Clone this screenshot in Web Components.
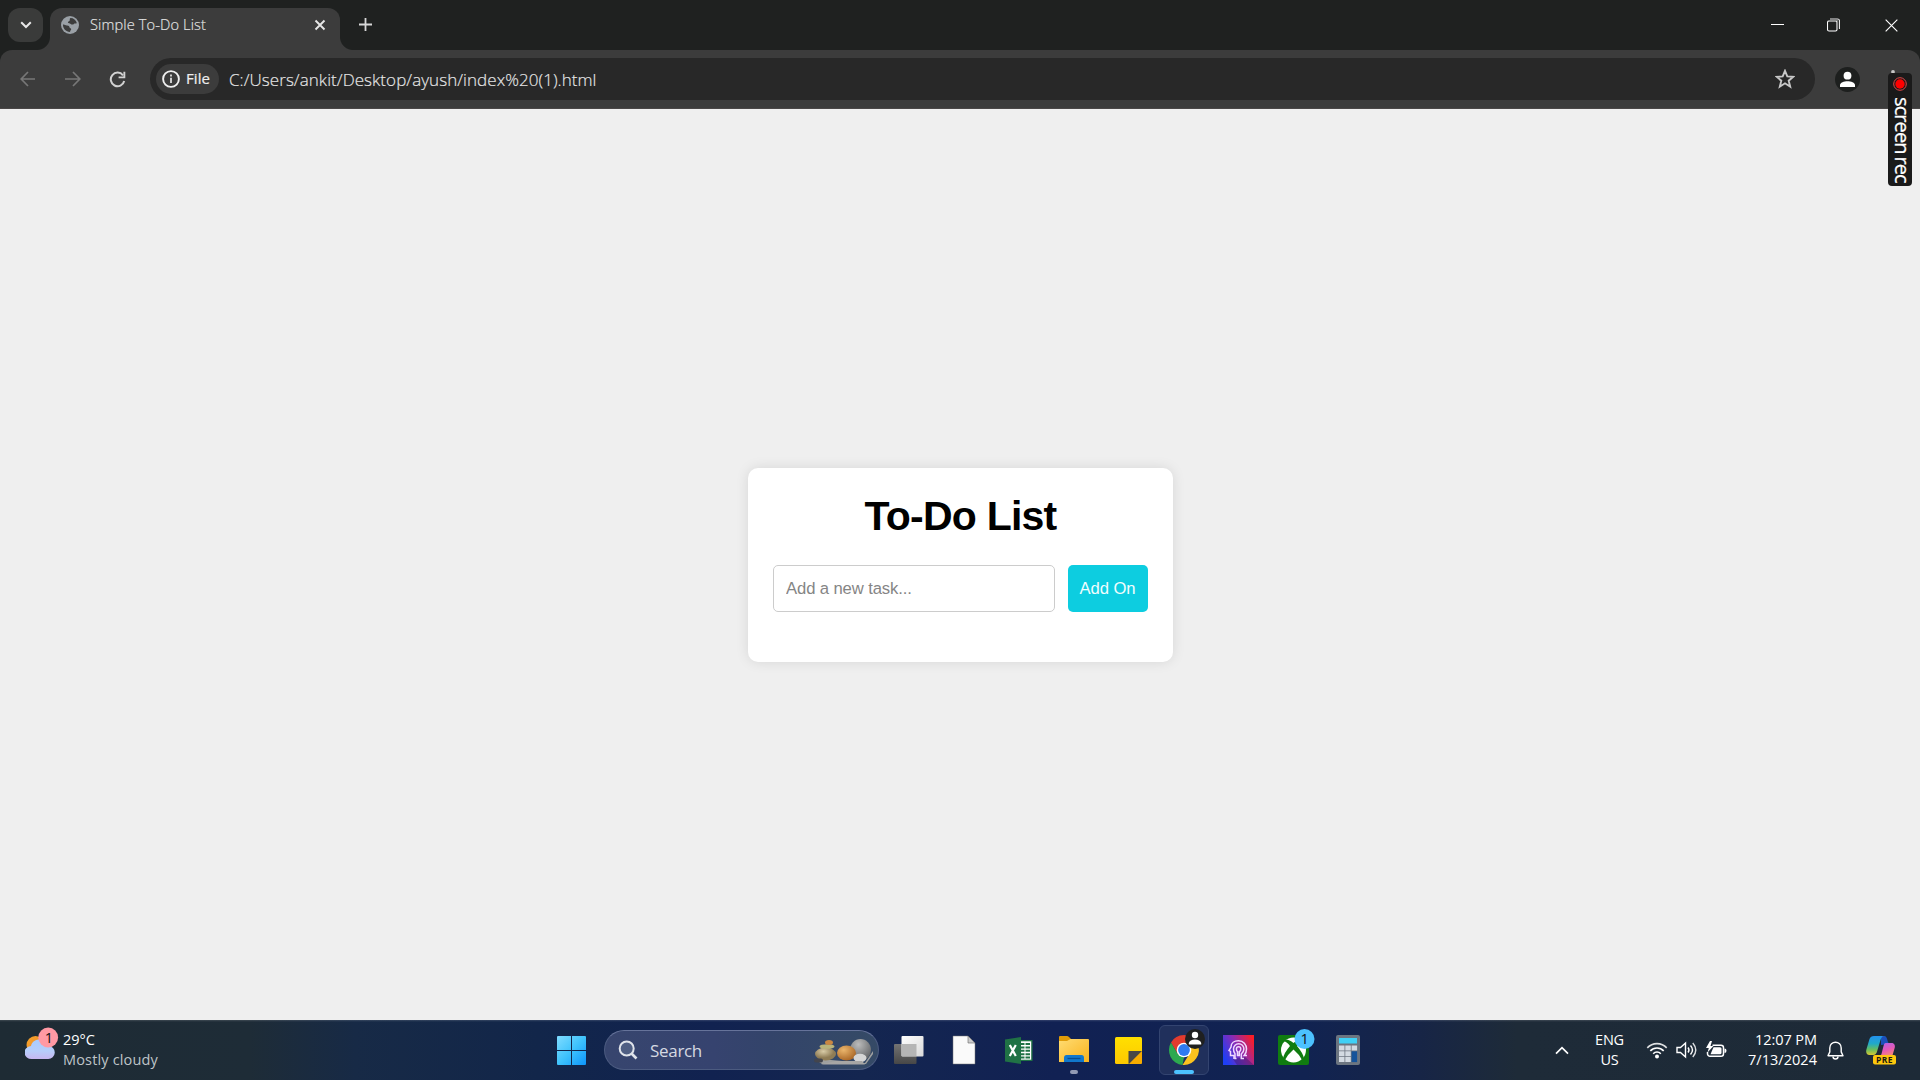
<!DOCTYPE html>
<html lang="en">
<head>
<meta charset="utf-8">
<title>Simple To-Do List</title>
<style>
html,body{margin:0;height:100%;overflow:hidden}
body{font-family:"Open Sans","Noto Sans",sans-serif;background:#efefef}
</style>
</head>
<body>
<desktop-screen></desktop-screen>
<script>
const define = (name, html, setup) => {
  const tpl = document.createElement('template');
  tpl.innerHTML = html;
  customElements.define(name, class extends HTMLElement {
    connectedCallback() {
      if (this.shadowRoot) return;
      this.attachShadow({mode: 'open'}).append(tpl.content.cloneNode(true));
      if (setup) setup(this);
    }
  });
};

/* Text run spread over a given advance width. */
define('fit-text', `<style>:host{display:block;white-space:pre;flex:none}span{display:inline-block}</style><span><slot></slot></span>`, el => {
  const s = el.shadowRoot.querySelector('span');
  const w = +el.getAttribute('w');
  const n = el.textContent.length;
  s.style.letterSpacing = ((w - s.getBoundingClientRect().width) / n) + 'px';
  el.style.width = w + 'px';
});

define('browser-tab', `<style>
:host{display:flex;align-items:center;position:relative;box-sizing:border-box;width:290px;height:42px;padding:0 14px 9px 11px;margin-left:7px;background:#3c3c3c;border-radius:12px 12px 0 0;align-self:flex-end;color:#e3e3e3;font-size:14.6px}
:host::before,:host::after{content:"";position:absolute;bottom:0;width:13px;height:13px}
:host::before{left:-13px;background:radial-gradient(circle at 0 0,transparent 12.5px,#3c3c3c 13.5px)}
:host::after{right:-13px;background:radial-gradient(circle at 100% 0,transparent 12.5px,#3c3c3c 13.5px)}
fit-text{margin:0 0 1px 11px;font-weight:300;-webkit-text-stroke:.15px #e3e3e3}
.x{margin-left:auto}
svg{display:block;flex:none}
</style>
<svg width="18" height="18" viewBox="0 0 18 18"><circle cx="9" cy="9" r="9" fill="#9aa0a6"/><path d="M2 8.600C3.600 8.200 4.500 9.600 6.200 9.400c1.600 0 2.200.9 2.400 2 .2 1 1.700.6 1.600 1.900-.1.900-.900 1-1.200 2.700C5 16 1.700 12.500 2 8.600zM9.500 2C12.600 2 15 4 15.800 7c-.9 1.200-2 .1-2.900.9-.9.900-2.500.6-3.200 0-.8-.7-2.500-.2-2.800-1.300-.2-1.100 1.200-1.300 1.700-1.900.5-.7-.3-2 .9-2.700z" fill="#3c3c3c"/></svg>
<fit-text w="116">Simple To-Do List</fit-text>
<svg class="x" width="12" height="12" viewBox="0 0 12 12"><path d="M1.500 1.500l9 9M10.500 1.500l-9 9" stroke="#e6e6e6" stroke-width="1.900"/></svg>`);

define('tab-strip', `<style>
:host{display:flex;height:50px;background:#1f2120;align-items:center;box-sizing:border-box}
.search{width:35px;height:34px;margin:0 0 0 8px;border-radius:12px;background:#3a3b3a;display:flex;align-items:center;justify-content:center}
svg{display:block;flex:none}
.plus{margin-left:19px;margin-bottom:1px}
.win{margin-left:auto;display:flex;align-items:center;padding-right:22px}
</style>
<div class="search"><svg width="12" height="8" viewBox="0 0 12 8"><path d="M1.200 1.300L6 6l4.800-4.700" fill="none" stroke="#e8e8e8" stroke-width="2"/></svg></div>
<browser-tab></browser-tab>
<svg class="plus" width="13" height="13" viewBox="0 0 13 13"><path d="M6.500 0v13M0 6.500h13" stroke="#d8d8d8" stroke-width="1.800"/></svg>
<div class="win">
<svg width="13" height="14" viewBox="0 0 13 14"><path d="M0 6.500h13" stroke="#fff"/></svg>
<svg style="margin:0 45px 0 43px" width="13" height="14" viewBox="0 0 13 14"><rect x=".5" y="3" width="9.500" height="10" rx="1.500" fill="none" stroke="#fff" stroke-width="1.100"/><path d="M3 1h7.500q2 0 2 2v8" fill="none" stroke="#e6e6e6" stroke-width="1.100"/><path d="M2 2.600h8.700v8" fill="none" stroke="#8d8e8d" stroke-width="1"/></svg>
<svg width="13" height="13" viewBox="0 0 14 14"><path d="M.7.7l12.600 12.600M13.300.7L.7 13.300" stroke="#fff" stroke-width="1.200"/></svg>
</div>`);

define('tool-bar', `<style>
:host{display:block;background:#1f2120}
.bar{display:flex;align-items:center;height:59px;box-sizing:border-box;background:#3c3c3c;border-radius:12px 12px 0 0;border-bottom:1px solid #4a4747;padding:0 20px}
svg{display:block;flex:none}
.omni{display:flex;align-items:center;width:1665px;height:42px;margin-left:24px;background:#282828;border-radius:21px;box-sizing:border-box;padding:0 20px 0 6px}
.chip{display:flex;align-items:center;box-sizing:border-box;width:63px;height:30px;border-radius:15px;background:#3c3c3c;padding-left:6px}
.chip fit-text{margin-left:6px;font-size:15px;color:#eee;font-weight:500;-webkit-text-stroke:.2px #eee;line-height:28px;height:30px}
.url{margin-left:10px;font-size:17px;font-weight:300;color:#e9e9e9;-webkit-text-stroke:.15px #e9e9e9;margin-top:1px}
.star{margin-left:auto}
.me{margin-left:20px}
.dots{margin-left:31px}
</style>
<div class="bar">
<svg width="16" height="16" viewBox="0 0 16 16"><path d="M15 8H1.500M8 1L1.200 8 8 15" fill="none" stroke="#777" stroke-width="1.700"/></svg>
<svg style="margin-left:29px" width="16" height="16" viewBox="0 0 16 16"><path d="M0 8h14.500M8 1l6.800 7L8 15" fill="none" stroke="#777" stroke-width="1.700"/></svg>
<svg style="margin-left:28px" width="17" height="17" viewBox="0 0 17 17"><path d="M14 4.300A6.800 6.800 0 1 0 15.200 10" fill="none" stroke="#d2d2d2" stroke-width="2"/><path d="M16.300.8v6.500H9.600V5.400h4.800V.8z" fill="#d2d2d2"/></svg>
<div class="omni">
<div class="chip"><svg width="18" height="18" viewBox="0 0 18 18"><circle cx="9" cy="9" r="7.900" fill="none" stroke="#f0f0f0" stroke-width="1.900"/><path d="M9 7.700v5.300M9 4.600v2" stroke="#e8e8e8" stroke-width="1.700"/></svg><fit-text w="24">File</fit-text></div>
<fit-text class="url" w="367.500">C:/Users/ankit/Desktop/ayush/index%20(1).html</fit-text>
<svg class="star" width="20" height="20" viewBox="0 0 20 20"><path d="M10 1.800l2.300 5.600 6 .4-4.600 3.900 1.500 6L10 14.300l-5.200 3.400 1.500-6L1.700 7.800l6-.4z" fill="none" stroke="#c8c8c8" stroke-width="1.900"/></svg>
</div>
<svg class="me" width="25" height="25" viewBox="0 0 25 25"><circle cx="12.500" cy="12.500" r="12.500" fill="#1d1f1e"/><circle cx="12.500" cy="8.700" r="3.900" fill="#fff"/><path d="M5 20v-2c0-2.500 4-3.800 7.500-3.800S20 15.500 20 18v2z" fill="#fff"/></svg>
<svg class="dots" width="4" height="18" viewBox="0 0 4 18"><circle cx="2" cy="2" r="1.900" fill="#c8c8c8"/><circle cx="2" cy="9" r="1.900" fill="#c8c8c8"/><circle cx="2" cy="16" r="1.900" fill="#c8c8c8"/></svg>
</div>`);

define('todo-card', `<style>
:host{display:block;width:425px;height:194px;box-sizing:border-box;background:#fff;border-radius:10px;box-shadow:0 0 12.500px rgba(0,0,0,.1);padding:25px;font-family:"Liberation Sans",Arial,sans-serif}
h1{margin:0 0 25px;font-size:41px;line-height:46px;height:47px;display:flex;justify-content:center;color:#000}
.row{display:flex;gap:13px}
input{font:16.670px "Liberation Sans",Arial,sans-serif;width:282px;height:47px;box-sizing:border-box;border:1px solid #ccc;border-radius:5px;padding:0 12px;background:#fff;letter-spacing:-.12px}
input::placeholder{color:#858585}
button{font:16.670px "Liberation Sans",Arial,sans-serif;width:80px;height:47px;border:0;border-radius:5px;padding:0 1px 0 0;background:#0dcde0;color:#f2fdfe;letter-spacing:-.1px}
</style>
<h1><fit-text w="192">To-Do List</fit-text></h1>
<div class="row"><input placeholder="Add a new task..."><button>Add On</button></div>`);

define('screen-rec', `<style>
:host{display:flex;flex-direction:column;align-items:center;position:absolute;left:1888px;top:73px;width:24px;height:113px;box-sizing:border-box;padding-top:3.500px;background:#1a1a1a;border-radius:4px;color:#fff;font-size:20px}
svg{display:block;flex:none}
div{writing-mode:vertical-rl;line-height:24px;height:88px;margin:6px 0 0 4px;white-space:pre;letter-spacing:-.9px;word-spacing:-1.500px;-webkit-text-stroke:.25px #fff}
</style>
<svg width="14" height="14" viewBox="0 0 14 14"><circle cx="7" cy="7" r="6.300" fill="none" stroke="#e34848" stroke-width="1"/><circle cx="7" cy="7" r="4.700" fill="#f00"/></svg>
<div>screen rec</div>`);

define('weather-widget', `<style>
:host{display:flex;width:532px;padding-left:25px;height:60px;box-sizing:border-box;font-size:14.500px;color:#fff;flex:none}
svg{display:block;margin-top:7px;flex:none}
.t{margin:10px 0 0 4px}fit-text{line-height:20px}.s{color:#bfc4c8}
</style>
<svg width="34" height="33" viewBox="0 0 34 33"><defs><linearGradient id="c" x2="0" y2="1"><stop offset="0" stop-color="#a9ccff"/><stop offset=".6" stop-color="#b7cdfa"/><stop offset="1" stop-color="#c7b6f0"/></linearGradient><linearGradient id="s" x2="1" y2="1"><stop stop-color="#f5a62c"/><stop offset="1" stop-color="#ef7f25"/></linearGradient></defs><circle cx="10.500" cy="18" r="9" fill="url(#s)"/><path d="M7 32a7 6.500 0 0 1-1-13C7 14 11 12.500 15 12.500c5 0 8 3 8.500 6.500a6.500 6.500 0 0 1-.5 13z" fill="url(#c)"/><circle cx="23.200" cy="10.500" r="9.900" fill="#ff99a4"/><text x="23.800" y="15.800" text-anchor="middle" font-family="Open Sans" font-size="14.500" fill="#111">1</text></svg>
<div class="t"><fit-text w="32">29°C</fit-text><fit-text class="s" w="95">Mostly cloudy</fit-text></div>`);

define('search-pill', `<style>
:host{display:flex;align-items:center;box-sizing:border-box;width:275px;height:40px;margin-left:18px;border:1px solid #4c5b80;border-top-color:#66739a;border-radius:20px;background:linear-gradient(90deg,#37456e,#36436f 40%,#33446a 60%,#354a66);padding:0 4px 0 13px;color:#d5d9e2;font-size:17px;flex:none}
svg{display:block;flex:none}fit-text{margin:1px 0 0 12px;line-height:38px}.r{margin-left:auto;margin-top:8px}
</style>
<svg width="20" height="20" viewBox="0 0 20 20"><circle cx="8.700" cy="8.500" r="7" fill="#8292ae55" stroke="#dfe3ea" stroke-width="2"/><path d="M13.500 13.500l5 5" stroke="#dfe3ea" stroke-width="2.600"/></svg>
<fit-text w="52">Search</fit-text>
<svg class="r" width="60" height="30" viewBox="0 0 60 30"><defs><radialGradient id="a" cx=".4" cy=".3"><stop stop-color="#d8cba6"/><stop offset="1" stop-color="#8f7c55"/></radialGradient><radialGradient id="b" cx=".35" cy=".3" r=".8"><stop stop-color="#eab56c"/><stop offset="1" stop-color="#a46020"/></radialGradient><radialGradient id="g" cx=".4" cy=".25" r=".8"><stop stop-color="#bbb"/><stop offset="1" stop-color="#5e6063"/></radialGradient></defs>
<path d="M2 21l6 4h44l7-10v-3L51 24l-34-3z" fill="#9fa0a0"/><ellipse cx="46.500" cy="11" rx="10.500" ry="11" fill="url(#g)"/><ellipse cx="32.500" cy="14" rx="9.500" ry="7.500" fill="url(#b)"/><ellipse cx="46" cy="19" rx="6.500" ry="4.200" fill="#d5d5d5"/><ellipse cx="11.500" cy="15" rx="10.500" ry="6.500" fill="url(#a)"/><ellipse cx="13" cy="7.500" rx="7.500" ry="2.300" fill="#b9b47a"/><ellipse cx="15" cy="3.500" rx="4" ry="2.500" fill="#c98742"/><path d="M7 25.500h44L48 22H22z" fill="#a7a6a5"/><rect x="0" y="19.500" width="9" height="4" rx="2" fill="#43454d"/></svg>`);

define('app-slot', `<style>:host{display:flex;position:relative;width:55px;height:60px;align-items:center;justify-content:center;flex:none}
:host([active])::before{content:"";position:absolute;left:3px;top:5px;width:48px;height:48px;border:1px solid #334470;border-radius:6px;background:#20305c}
:host([active])::after,:host([running])::after{content:"";position:absolute;bottom:6px;height:4px;border-radius:2px;left:18px;width:20px;background:#4cc2ff}
:host([running])::after{left:24px;width:8px;background:#929ab4}
::slotted(svg){display:block;position:relative;overflow:visible}</style><slot></slot>`);

define('system-tray', `<style>
:host{display:flex;align-items:center;margin-left:auto;height:60px;color:#fff;padding-right:24px;font-size:14.500px}
svg{display:block;flex:none}fit-text{line-height:20px}
.l{margin-left:26px;display:flex;flex-direction:column;align-items:center}
.d{margin-left:21px;display:flex;flex-direction:column;align-items:flex-end}
</style>
<svg width="14" height="9" viewBox="0 0 14 9"><path d="M1 7.700l6-6 6 6" fill="none" stroke="#fff" stroke-width="1.700"/></svg>
<div class="l"><fit-text w="29">ENG</fit-text><fit-text w="18">US</fit-text></div>
<svg style="margin-left:22px" width="22" height="18" viewBox="0 0 22 18"><g fill="none" stroke="#fff" stroke-width="1.600"><path d="M1.300 6.900a13.200 13.200 0 0 1 19.400 0" opacity=".85"/><path d="M4.300 9.900a9.200 9.200 0 0 1 13.400 0"/><path d="M7.200 12.700a5.200 5.200 0 0 1 7.600 0"/></g><circle cx="11" cy="15.500" r="2" fill="#fff"/></svg>
<svg style="margin-left:8px" width="22" height="18" viewBox="0 0 22 18"><g fill="none" stroke="#fff" stroke-width="1.400"><path d="M1 6.500h3.500L9.500 2v14l-5-4.500H1z"/><path d="M12 6.500q2 2.500 0 5"/><path d="M14.500 4.500q4 4.500 0 9"/><path d="M16.800 2q6 7 0 14" opacity=".85"/></g></svg>
<svg style="margin-left:8px" width="21" height="18" viewBox="0 0 21 18"><path d="M6.500 4.300H15a2.500 2.500 0 0 1 2.500 2.500v6a2.500 2.500 0 0 1-2.500 2.500H4a2.500 2.500 0 0 1-2.500-2.500V11" fill="none" stroke="#fff" stroke-width="1.500"/><path d="M7.500 6.300H14q1.500 0 1.500 1.500v4q0 1.500-1.500 1.500H4.500z" fill="#fff"/><path d="M18.500 7.500q2 0 2 2.200t-2 2.300z" fill="#fff"/><path d="M4 0L0 7h2.800L1.500 11.500 7.500 5H4.500L6 0z" fill="#fff"/></svg>
<div class="d"><fit-text w="62">12:07 PM</fit-text><fit-text w="69">7/13/2024</fit-text></div>
<svg style="margin-left:10px" width="17" height="19" viewBox="0 0 17 19"><path d="M8.500 1.200a5.700 5.700 0 0 0-5.700 5.700v4L1 14.700h15l-1.800-3.800v-4a5.700 5.700 0 0 0-5.700-5.700z" fill="none" stroke="#fff" stroke-width="1.400" stroke-linejoin="round"/><path d="M6 15.500a2.500 2.500 0 0 0 5 0" fill="none" stroke="#fff" stroke-width="1.400"/></svg>
<svg style="margin-left:22px" width="30" height="30" viewBox="0 0 30 30"><defs><linearGradient id="l" x2="0" y2="1"><stop stop-color="#2392ee"/><stop offset=".4" stop-color="#20a9c9"/><stop offset=".7" stop-color="#64bd61"/><stop offset="1" stop-color="#d7c831"/></linearGradient><linearGradient id="m" x2=".4" y2="1"><stop stop-color="#a962f0"/><stop offset=".6" stop-color="#e65ab5"/><stop offset="1" stop-color="#f58578"/></linearGradient></defs><path d="M15 1h2.500c3 0 3.500 2 4.300 5.500L23 9l-8 1z" fill="#1b50ba"/><path d="M8 1h10c-2 0-3 2-3.800 5l-3 10q-1 4-4 4H3.500C.7 20-.4 17.500.4 14.500L3.500 4Q4.500 1 8 1z" fill="url(#l)"/><path d="M18 8h7.500c3 0 4 2.500 3 5.500L26 22H12c3 0 3.500-3 4-5l1.500-6q.5-3 2-3z" fill="url(#m)"/><rect x="7" y="20" width="23" height="9.500" rx="2" fill="#fdc70d"/><text x="18.500" y="27.800" text-anchor="middle" font-family="Open Sans" font-weight="700" font-size="8.500" letter-spacing=".4" fill="#1a1a10">PRE</text></svg>`);

define('task-bar', `<style>
:host{display:flex;align-items:center;height:60px;box-sizing:border-box;background:linear-gradient(#ffffff24,#ffffff00 2px),linear-gradient(90deg,#1e2b34 0,#1e2c37 13%,#172a46 18.500%,#12264a 28%,#112250 37%,#142650 45%,#112153 55%,#112351 68%,#172546 74%,#1e2b38 79%,#1d2a37 100%)}
svg{display:block;flex:none}.slots{display:flex;margin-left:2px}
</style>
<weather-widget></weather-widget>
<svg style="margin-left:25px" width="29" height="29" viewBox="0 0 29 29"><defs><linearGradient id="w" gradientUnits="userSpaceOnUse" x2="29" y2="29"><stop stop-color="#80dcff"/><stop offset=".5" stop-color="#3fc3fc"/><stop offset="1" stop-color="#0d95fb"/></linearGradient></defs><path d="M1 0h13v14H0V1q0-1 1-1zM15 0h13q1 0 1 1v13H15zM0 15h14v14H1q-1 0-1-1zM15 15h14v13q0 1-1 1H15z" fill="url(#w)"/></svg>
<search-pill></search-pill>
<div class="slots">
<app-slot><svg width="30" height="28" viewBox="0 0 30 28"><defs><linearGradient id="t" x2="1" y2="1"><stop stop-color="#fff"/><stop offset="1" stop-color="#d9d9d9"/></linearGradient><linearGradient id="u" x2="0" y2="1"><stop stop-color="#737373"/><stop offset="1" stop-color="#474747"/></linearGradient></defs><rect y="8" width="22.500" height="20" rx="1" fill="url(#u)"/><rect x="7.500" width="22" height="20.500" rx="1" fill="url(#t)"/><path d="M7.500 8h15v12h-15z" fill="#b5b5b5"/></svg></app-slot>
<app-slot><svg width="22" height="28" viewBox="0 0 22 28"><path d="M0 0h15l7 7v21H0z" fill="#fafafa" stroke="#777" stroke-width=".5"/><path d="M15 0v7h7z" fill="#ccc" stroke="#666" stroke-width=".6"/></svg></app-slot>
<app-slot><svg width="28" height="27" viewBox="0 0 28 27"><path d="M15 3h12.500v21H15z" fill="#207245"/><path d="M16 4.300h10.200v18.400H16z" fill="#fff"/><g fill="#207245"><path d="M16 6h3.500v2H16zM20.500 6h4.500v2h-4.500zM16 9.400h3.500v2H16zM20.500 9.400h4.500v2h-4.500zM16 12.800h3.500v2H16zM20.500 12.800h4.500v2h-4.500zM16 16.200h3.500v2H16zM20.500 16.200h4.500v2h-4.500zM16 19.600h3.500v1.800H16zM20.500 19.600h4.500v1.800h-4.500z"/></g><path d="M16 0v27L0 24.500v-22z" fill="#207245"/><path d="M4.800 8l6 11M10.800 8l-6 11" stroke="#fff" stroke-width="2.200"/></svg></app-slot>
<app-slot running><svg width="30" height="26" viewBox="0 0 30 26"><defs><linearGradient id="f" x2="1" y2="1"><stop stop-color="#ffdc72"/><stop offset="1" stop-color="#f9b31d"/></linearGradient></defs><path d="M0 0q0-1 1-1h7q1 0 2 1l2 2v3L8 8H0z" fill="#e09c08"/><path d="M0 4h8l3.500-2H29q1 0 1 1v22H0z" fill="url(#f)"/><path d="M5 25v-4q0-3 2.500-3h15q2.500 0 2.500 3v4z" fill="#1178cd"/><path d="M8.500 21.500h13" stroke="#064e94" stroke-width="1.300"/></svg></app-slot>
<app-slot><svg width="27" height="27" viewBox="0 0 27 27"><defs><linearGradient id="n" x2="0" y2="1"><stop stop-color="#ffe000"/><stop offset="1" stop-color="#fdc800"/></linearGradient></defs><path d="M1.500 0h24Q27 0 27 1.500V14L14 27H1.500Q0 27 0 25.500v-24Q0 0 1.500 0z" fill="url(#n)"/><path d="M13.500 14H27L14 27q-.5 0-.5-1z" fill="#474747"/><path d="M27 14v12q0 1-1 1H14z" fill="#f7ac00"/></svg></app-slot>
<app-slot active><svg width="30" height="30" viewBox="0 0 30 30"><path d="M2 7.500A15 15 0 0 1 28 7.500L15 8.200 8.700 19z" fill="#e23b2e"/><path d="M2 7.500l6.600 11.300L15 22l-1.500 8A15 15 0 0 1 2 7.500z" fill="#2da94f"/><path d="M15 8h13a15 15 0 0 1-14.500 22l7.500-12z" fill="#fcc31e"/><circle cx="15" cy="15" r="7.300" fill="#fff"/><circle cx="15" cy="15" r="5.900" fill="#2f7af0"/><circle cx="26" cy="4" r="10" fill="#1f2020"/><circle cx="26" cy="0" r="3.200" fill="#fff"/><path d="M19.800 9.500V8q1-3.500 6.200-3.500T32.200 8v1.500z" fill="#fff"/></svg></app-slot>
<app-slot><svg width="31" height="30" viewBox="0 0 31 30"><defs><linearGradient id="q" y1=".7" x2="1" y2=".2"><stop stop-color="#1e3ff5"/><stop offset=".5" stop-color="#8a2bb5"/><stop offset="1" stop-color="#fb1d26"/></linearGradient></defs><path d="M0 0h31v30H0z" fill="url(#q)"/><path d="M22 22l9 8H14l-4-6z" fill="#32195c" opacity=".4"/><g fill="none" stroke="#f0d8ff" stroke-width="1.500"><path d="M11 24v-3.500H7.500v-4L6 15.500l2-3.500C8 8 11.500 5.800 15.500 5.800c5 0 8 3.700 8 8.200 0 3-1 5-2.300 6.500H24"/><path d="M13.500 23.500H12v-4.800q-1.500-1.700-1.500-4.700a5.200 5.200 0 0 1 10.400 0q0 3-2.600 5v4.500H21"/><path d="M14.500 20.500h1.800v-3.800q1.500-.7 1.500-2.700a2.200 2.200 0 0 0-4.400 0q0 2 1.100 2.700z"/></g></svg></app-slot>
<app-slot><svg width="31" height="30" viewBox="0 0 31 30"><rect width="31" height="30" rx="2" fill="#107c10"/><circle cx="15.500" cy="15" r="12.500" fill="#fff"/><path d="M7 4.500q4-.5 8.500 3.500Q20 4 24 4.500l1.500 2q-3-.5-6.500 4.500 6 7 7 12.500l-1.500 2.300Q21.500 19.500 15.500 14.500 9.500 19.500 6.500 25.800L5 23.500Q6 18 12 11 8.500 6 5.500 6.500z" fill="#107c10"/><circle cx="26.500" cy="4" r="10" fill="#4cc2ff"/><text x="26.700" y="9.300" text-anchor="middle" font-family="Open Sans" font-size="14.500" fill="#111">1</text></svg></app-slot>
<app-slot><svg style="right:.5px" width="24" height="30" viewBox="0 0 24 30"><rect width="24" height="30" rx="2" fill="#6c7580"/><rect x="3" y="3" width="18" height="5.500" fill="#3fd0f5"/><g fill="#d3dae2"><path d="M3 10.500h5.500v5H3zM9.300 10.500h5.500v5H9.300zM15.600 10.500h5.500v5h-5.500zM3 16.300h5.500v5H3zM9.300 16.300h5.500v5H9.300zM3 22.100h5.500v5H3zM9.300 22.100h5.500v5H9.300z"/></g><path d="M15.600 16.300h5.500v10.800h-5.500z" fill="#15539a"/></svg></app-slot>
</div>
<system-tray></system-tray>`);

define('desktop-screen', `<style>
:host{display:flex;flex-direction:column;position:relative;width:1920px;height:1080px;background:#efefef;overflow:hidden}
main{flex:1;display:flex;align-items:center;justify-content:center;padding-left:1px;padding-top:1px;box-sizing:border-box}
</style>
<tab-strip></tab-strip><tool-bar></tool-bar><main><todo-card></todo-card></main><task-bar></task-bar><screen-rec></screen-rec>`);
</script>
</body>
</html>
